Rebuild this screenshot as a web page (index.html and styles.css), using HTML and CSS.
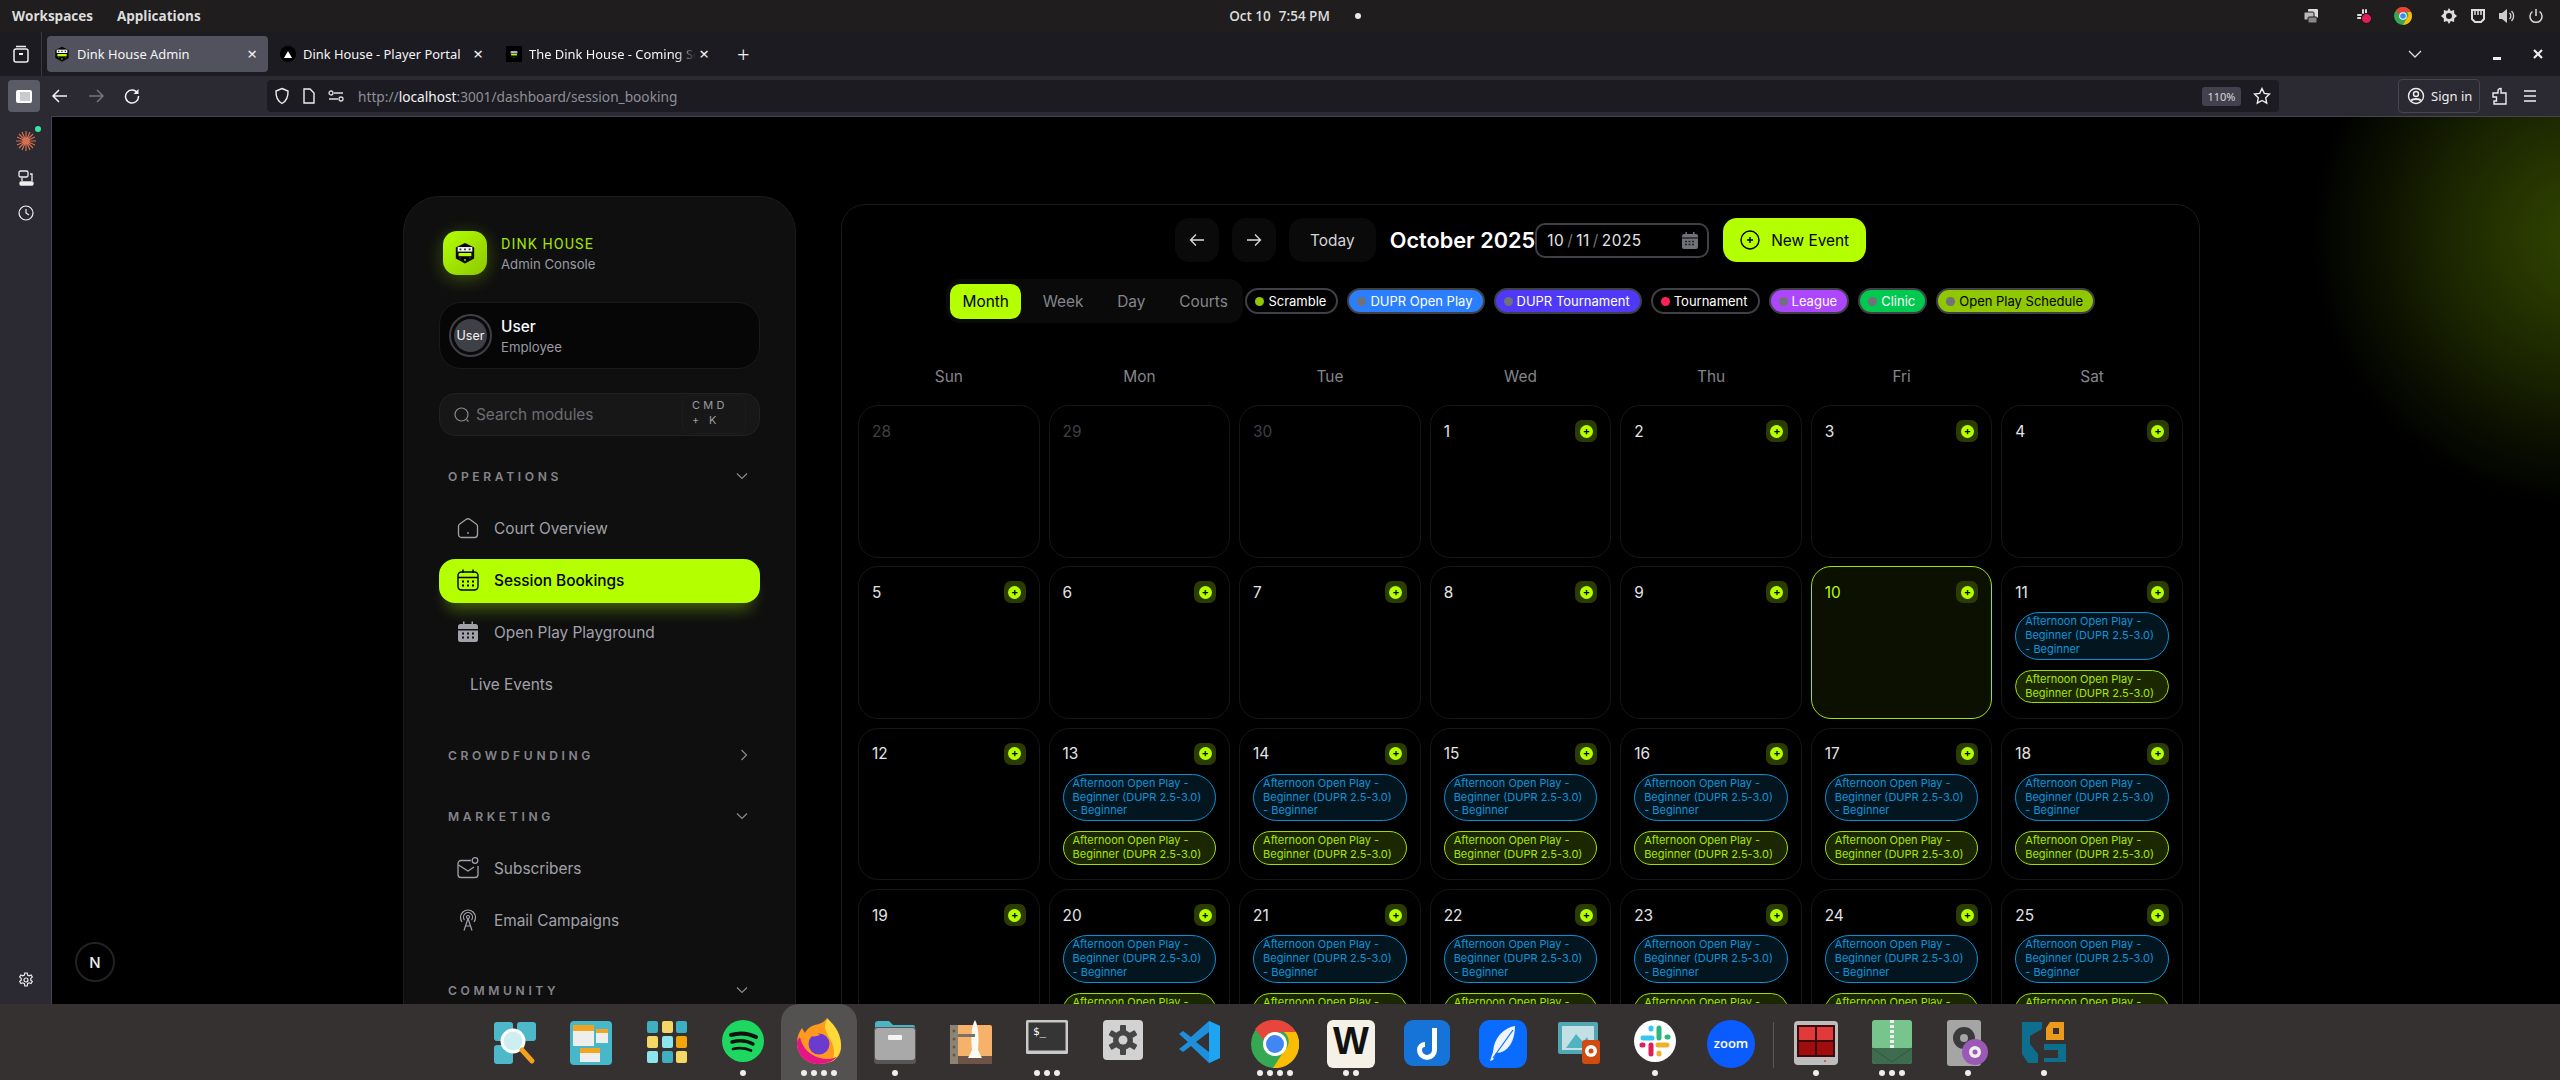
FILE: index.html
```html
<!DOCTYPE html>
<html lang="en">
<head>
    <meta charset="UTF-8">
    <meta name="viewport" content="width=device-width, initial-scale=1.0">
    <title>Dink House Admin</title>
    <link rel="stylesheet" href="styles.css">
</head>
<body>
    <svg class="defs" width="0" height="0">
        <symbol id="shield" viewBox="0 0 24 24">
            <path d="M12 1 22 6v12l-10 5.500L2 18V6z" fill="#050505"/>
            <rect x="4" y="5.500" width="16" height="5" fill="#f2f2f2"/>
            <path d="M6 7h2v2H6zM11 7h2v2h-2zM16 7h2v2h-2z" fill="#333"/>
            <rect x="5" y="12" width="14" height="3.500" fill="#b4ff00"/>
            <path d="M6 17h1v1H6zM17 17h1v1h-1z" fill="#888"/>
            <circle cx="12" cy="19.500" r="1" fill="#b4ff00"/>
        </symbol>
    </svg>

    <!-- desktop top bar -->
    <header class="topbar">
        <div class="topbar-left"><span>Workspaces</span><span>Applications</span></div>
        <div class="topbar-clock"><span>Oct 10</span><span>7:54 PM</span><i class="clock-dot"></i></div>
        <div class="topbar-right">
            <svg class="tray-a" width="18" height="18" viewBox="0 0 18 18"><rect x="6" y="2" width="10" height="9" rx="1" fill="#ddd"/><rect x="2" y="5" width="10" height="8" rx="1" fill="#bbb" stroke="#1f1d1d"/><rect x="6" y="10" width="9" height="6" rx="1" fill="#888" stroke="#1f1d1d"/></svg>
            <svg class="tray-b" width="18" height="18" viewBox="0 0 18 18"><g fill="#ddd"><rect x="2" y="7" width="5" height="2" rx="1"/><rect x="7" y="2" width="2" height="5" rx="1"/><rect x="10" y="2" width="2" height="5" rx="1"/><rect x="2" y="10" width="5" height="2" rx="1"/></g><circle cx="11.500" cy="11.500" r="5" fill="#e01e5a" stroke="#111"/></svg>
            <svg class="tray-c" width="20" height="20" viewBox="0 0 20 20"><circle cx="10" cy="10" r="9" fill="#34a853"/><path d="M10 1a9 9 0 0 1 8 5h-8a4 4 0 0 0-4 3L3 4a9 9 0 0 1 7-3z" fill="#ea4335"/><path d="M18 6a9 9 0 0 1-8 13l4-7a4 4 0 0 0 0-6z" fill="#fbbc04"/><circle cx="10" cy="10" r="3.800" fill="#fff"/><circle cx="10" cy="10" r="2.800" fill="#4285f4"/></svg>
            <svg class="tray-d" width="18" height="18" viewBox="0 0 18 18"><path d="M9 1l1.800 3 3.300-1 .1 3.400L17 9l-2.800 2.600-.1 3.400-3.300-1L9 17l-1.800-3-3.300 1-.1-3.400L1 9l2.800-2.600.1-3.400 3.300 1z" fill="#ddd"/><circle cx="9" cy="9" r="3" fill="#1f1d1d"/></svg>
            <svg width="16" height="16" viewBox="0 0 16 16"><path d="M2 2h12v9l-3 3H5l-3-3z" fill="none" stroke="#ddd" stroke-width="2"/><path d="M5 3v4M8 3v4M11 3v4" stroke="#ddd" stroke-width="1.500"/></svg>
            <svg width="18" height="16" viewBox="0 0 18 16"><path d="M1 5h3l5-4v14l-5-4H1z" fill="#ccc"/><path d="M11.500 5a4 4 0 0 1 0 6M13.500 3a7 7 0 0 1 0 10" fill="none" stroke="#ccc" stroke-width="1.400"/></svg>
            <svg width="16" height="16" viewBox="0 0 16 16" fill="none" stroke="#ddd" stroke-width="1.500"><path d="M8 1v7"/><path d="M4.500 3.500a6 6 0 1 0 7 0"/></svg>
        </div>
    </header>

    <!-- firefox tabs -->
    <div class="tabbar">
        <div class="tabbar-side">
            <svg width="18" height="20" viewBox="0 0 18 20" fill="none" stroke="#eee" stroke-width="1.500"><rect x="2" y="5" width="14" height="13" rx="2"/><path d="M4 2.500h10"/><path d="M7 10h4" stroke-width="2"/></svg>
        </div>
        <div class="tab tab-active">
            <svg class="tab-icon" width="16" height="18"><use href="#shield"/></svg>
            <span class="tab-label">Dink House Admin</span><span class="tab-close">×</span>
        </div>
        <div class="tab">
            <span class="tab-icon fav-tri"><i></i></span>
            <span class="tab-label">Dink House - Player Portal</span><span class="tab-close">×</span>
        </div>
        <div class="tab">
            <span class="tab-icon fav-square"><svg width="10" height="12"><use href="#shield"/></svg></span>
            <span class="tab-label tab-fade">The Dink House - Coming Soon</span><span class="tab-close">×</span>
        </div>
        <span class="tab-plus">+</span>
        <div class="tabbar-right">
            <svg class="tab-chevron" width="16" height="10" viewBox="0 0 16 10" fill="none" stroke="#ddd" stroke-width="1.300"><path d="M2 2l6 6 6-6"/></svg>
            <span class="win-min"></span>
            <svg class="win-close" width="10" height="10" viewBox="0 0 10 10" stroke="#eee" stroke-width="2.200"><path d="M1 1l8 8M9 1l-8 8"/></svg>
        </div>
    </div>

    <!-- firefox toolbar -->
    <div class="toolbar">
        <button class="sidebar-toggle"><i></i></button>
        <svg class="nav-back" width="18" height="16" viewBox="0 0 18 16" fill="none" stroke="#f2f2f2" stroke-width="1.500"><path d="M16 8H3M8 2 2 8l6 6"/></svg>
        <svg class="nav-forward" width="18" height="16" viewBox="0 0 18 16" fill="none" stroke="#75747c" stroke-width="1.500"><path d="M2 8h13M10 2l6 6-6 6"/></svg>
        <svg class="nav-reload" width="16" height="16" viewBox="0 0 16 16" fill="none" stroke="#f2f2f2" stroke-width="1.500"><path d="M13.500 5A6.500 6.500 0 1 0 14.500 8"/><path d="M14.500 1v5h-5" fill="#f2f2f2" stroke="none"/></svg>
        <div class="urlbar">
            <svg width="16" height="18" viewBox="0 0 16 18" fill="none" stroke="#eee" stroke-width="1.400"><path d="M8 1.500 14 4c.3 6-1.500 10-6 12.500C3.500 14 1.700 10 2 4z"/></svg>
            <svg width="14" height="18" viewBox="0 0 14 18" fill="none" stroke="#eee" stroke-width="1.400"><path d="M2 2h6l4 4v10H2z"/></svg>
            <svg width="16" height="14" viewBox="0 0 16 14" fill="none" stroke="#ddd" stroke-width="1.300"><path d="M6 4h9M1 10h9"/><circle cx="3" cy="4" r="2"/><circle cx="13" cy="10" r="2"/></svg>
            <span class="url"><span>http://</span><b>localhost</b><span>:3001/dashboard/session_booking</span></span>
            <span class="zoom-badge">110%</span>
            <svg class="url-star" width="18" height="18" viewBox="0 0 18 18" fill="none" stroke="#eee" stroke-width="1.400"><path d="m9 1.500 2.300 4.900 5.200.7-3.800 3.700 1 5.300L9 13.500l-4.700 2.600 1-5.300-3.800-3.700 5.200-.7z"/></svg>
        </div>
        <div class="signin">
            <svg width="18" height="18" viewBox="0 0 18 18" fill="none" stroke="#eee" stroke-width="1.400"><circle cx="9" cy="9" r="7.500"/><circle cx="9" cy="7" r="2.500"/><path d="M4 13.500c2-2 8-2 10 0" stroke-width="2"/></svg>
            <span>Sign in</span>
        </div>
        <svg class="tool-puzzle" width="16" height="20" viewBox="0 0 16 20" fill="none" stroke="#eee" stroke-width="1.400"><path d="M1 7h5V5a2.500 2.500 0 0 1 3 -2.500V7h5v11H2v-3h2.500v-4H1z"/></svg>
        <svg class="tool-menu" width="16" height="14" viewBox="0 0 16 14" stroke="#eee" stroke-width="1.400"><path d="M2 2h12M2 7h12M2 12h12"/></svg>
    </div>

    <div class="workspace">
        <!-- firefox sidebar -->
        <aside class="ff-side">
            <span class="ff-ext">
                <svg width="20" height="20" viewBox="0 0 20 20" stroke="#d9704f" stroke-width="1.200"><path d="M10 0v20M0 10h20M3 3l14 14M17 3 3 17M6 1l8 18M14 1 6 19M1 6l18 8M19 6 1 14"/><circle cx="10" cy="10" r="3.500" fill="#d9704f" stroke="none"/></svg>
                <i></i>
            </span>
            <svg width="16" height="16" viewBox="0 0 16 16" fill="none" stroke="#eee" stroke-width="1.300"><rect x="1" y="1" width="9" height="6" rx="1.500"/><path d="M12 4h2v7M4 8v3"/><rect x="2" y="12" width="13" height="3" rx="1" fill="#eee"/></svg>
            <svg width="16" height="16" viewBox="0 0 16 16" fill="none" stroke="#eee" stroke-width="1.200"><circle cx="8" cy="8" r="7"/><path d="M8 4v4l3 2"/></svg>
            <svg class="ff-gear" width="16" height="16" viewBox="0 0 16 16" fill="none" stroke="#eee" stroke-width="1.200"><path d="M6.800 1h2.400l.4 2 1.600.8 1.900-.8 1.200 2-1.500 1.400v1.800l1.500 1.300-1.200 2.100-1.900-.8-1.600.9-.4 2.300H6.800l-.4-2.300-1.600-.9-1.900.8-1.200-2.100 1.500-1.300V6.400L1.700 5l1.200-2 1.900.8 1.600-.8z"/><circle cx="8" cy="8" r="2"/></svg>
        </aside>

        <main class="page">
            <div class="glow"></div>
            <div class="next-badge">N</div>

            <!-- admin sidebar -->
            <nav class="panel">
                <div class="brand">
                    <div class="brand-logo"><svg width="22" height="22"><use href="#shield"/></svg></div>
                    <div>
                        <div class="brand-name">DINK HOUSE</div>
                        <div class="brand-sub">Admin Console</div>
                    </div>
                </div>

                <div class="user-card">
                    <div class="avatar"><span>User</span></div>
                    <div>
                        <div class="user-name">User</div>
                        <div class="user-role">Employee</div>
                    </div>
                </div>

                <div class="search">
                    <svg width="16" height="16" viewBox="0 0 16 16" fill="none" stroke="#8a8a90" stroke-width="1.200"><circle cx="7.500" cy="7.500" r="6.500"/><path d="m12.500 12.500 2 2"/></svg>
                    <span class="search-text">Search modules</span>
                    <span class="kbd">CMD + K</span>
                </div>

                <div class="section section-first">
                    <div class="section-head">
                        <span>OPERATIONS</span>
                        <svg class="chev" width="12" height="8" viewBox="0 0 12 8" fill="none" stroke="#8a8a90" stroke-width="1.200"><path d="m1 1.500 5 5 5-5"/></svg>
                    </div>
                    <div class="nav-list">
                        <a class="nav-item">
                            <svg width="22" height="22" viewBox="0 0 22 22" fill="none" stroke="#a1a1aa" stroke-width="1.300"><path d="M1.500 9.500c0-1 .5-1.800 1.300-2.400l6.500-4.800a3 3 0 0 1 3.400 0l6.500 4.800c.8.600 1.300 1.400 1.300 2.400v8a3 3 0 0 1-3 3h-13a3 3 0 0 1-3-3z"/><path d="M11 15v2"/></svg>
                            Court Overview
                        </a>
                        <a class="nav-item nav-active">
                            <svg width="22" height="22" viewBox="0 0 22 22" fill="none" stroke="#000" stroke-width="1.400"><rect x="1" y="3" width="20" height="18" rx="3.500"/><path d="M1 8.500h20M6 .5V4M16 .5V4"/><path d="M5 12.500h2M10 12.500h2M15 12.500h2M5 16.500h2M10 16.500h2M15 16.500h2" stroke-width="2"/></svg>
                            Session Bookings
                        </a>
                        <a class="nav-item">
                            <svg width="22" height="22" viewBox="0 0 22 22" fill="#a1a1aa"><path d="M6 .5h1.500V3h7V.5H16V3h2.500A2.500 2.500 0 0 1 21 5.500V8H1V5.500A2.500 2.500 0 0 1 3.500 3H6z"/><path d="M1 9.500h20v9a2.500 2.500 0 0 1-2.500 2.500h-15A2.500 2.500 0 0 1 1 18.500z"/><path d="M5 12.500h2M10 12.500h2M15 12.500h2M5 16.500h2M10 16.500h2M15 16.500h2" stroke="#0f0f0f" stroke-width="2"/></svg>
                            Open Play Playground
                        </a>
                        <a class="nav-item nav-plain">Live Events</a>
                    </div>
                </div>

                <div class="section section-tight">
                    <div class="section-head">
                        <span>CROWDFUNDING</span>
                        <svg class="chev" width="8" height="12" viewBox="0 0 8 12" fill="none" stroke="#8a8a90" stroke-width="1.200"><path d="m1.500 1 5 5-5 5"/></svg>
                    </div>
                </div>

                <div class="section">
                    <div class="section-head">
                        <span>MARKETING</span>
                        <svg class="chev" width="12" height="8" viewBox="0 0 12 8" fill="none" stroke="#8a8a90" stroke-width="1.200"><path d="m1 1.500 5 5 5-5"/></svg>
                    </div>
                    <div class="nav-list">
                        <a class="nav-item">
                            <svg width="22" height="22" viewBox="0 0 22 22" fill="none" stroke="#a1a1aa" stroke-width="1.300"><path d="M14 3.500H4a3 3 0 0 0-3 3v11a3 3 0 0 0 3 3h14a3 3 0 0 0 3-3V9"/><path d="m1.500 8 9.500 6 6-4"/><circle cx="18" cy="3.500" r="2.800"/></svg>
                            Subscribers
                        </a>
                        <a class="nav-item">
                            <svg width="22" height="22" viewBox="0 0 22 22" fill="none" stroke="#a1a1aa" stroke-width="1.200"><path d="M5 13a7.500 7.500 0 1 1 12 0"/><path d="M7.500 11a4.500 4.500 0 1 1 7 0"/><circle cx="11" cy="8" r="1.500"/><path d="m11 9.500-4 12M11 9.500l4 12M8.500 17h5"/></svg>
                            Email Campaigns
                        </a>
                    </div>
                </div>

                <div class="section section-last">
                    <div class="section-head">
                        <span>COMMUNITY</span>
                        <svg class="chev" width="12" height="8" viewBox="0 0 12 8" fill="none" stroke="#8a8a90" stroke-width="1.200"><path d="m1 1.500 5 5 5-5"/></svg>
                    </div>
                </div>
            </nav>

            <!-- calendar -->
            <section class="calendar">
                <div class="cal-top">
                    <button class="icon-btn"><svg width="16" height="14" viewBox="0 0 16 14" fill="none" stroke="#ddd" stroke-width="1.300"><path d="M15 7H2M7 1.500 1.500 7 7 12.500"/></svg></button>
                    <button class="icon-btn"><svg width="16" height="14" viewBox="0 0 16 14" fill="none" stroke="#ddd" stroke-width="1.300"><path d="M1 7h13M9 1.500 14.500 7 9 12.500"/></svg></button>
                    <button class="today-btn">Today</button>
                    <h2 class="cal-title">October 2025</h2>
                    <div class="date-input">
                        <span>10</span><i>/</i><span>11</span><i>/</i><span>2025</span>
                        <svg width="16" height="18" viewBox="0 0 16 18" fill="#71717a"><path d="M3.500 1h1.500v2h6V1h1.500v2H14a2 2 0 0 1 2 2v1.500H0V5a2 2 0 0 1 2-2h1.500z"/><path d="M0 7.500h16V16a2 2 0 0 1-2 2H2a2 2 0 0 1-2-2z"/><path d="M3 10.500h10M3 13.500h10" stroke="#222" stroke-width="1.500" stroke-dasharray="2 1.500"/></svg>
                    </div>
                    <button class="new-event">
                        <svg width="20" height="20" viewBox="0 0 20 20" fill="none" stroke="#000" stroke-width="1.400"><circle cx="10" cy="10" r="9"/><path d="M10 7v6M7 10h6"/></svg>
                        New Event
                    </button>
                </div>

                <div class="cal-filters">
                    <div class="view-tabs">
                        <button class="view-tab view-active">Month</button>
                        <button class="view-tab">Week</button>
                        <button class="view-tab">Day</button>
                        <button class="view-tab">Courts</button>
                    </div>
                    <span class="chip"><i class="dot-lime"></i>Scramble</span>
                    <span class="chip chip-blue"><i></i>DUPR Open Play</span>
                    <span class="chip chip-indigo"><i></i>DUPR Tournament</span>
                    <span class="chip"><i class="dot-rose"></i>Tournament</span>
                    <span class="chip chip-purple"><i></i>League</span>
                    <span class="chip chip-green"><i></i>Clinic</span>
                    <span class="chip chip-lime"><i></i>Open Play Schedule</span>
                </div>

                <div class="weekdays">
                    <span>Sun</span><span>Mon</span><span>Tue</span><span>Wed</span><span>Thu</span><span>Fri</span><span>Sat</span>
                </div>
                <div class="cal-grid" id="cal-grid"></div>
            </section>
        </main>
    </div>

    <!-- desktop dock -->
    <footer class="dock">
        <div class="dock-item">
            <svg width="46" height="46" viewBox="0 0 46 46"><g fill="#4db8c9"><rect x="2" y="2" width="19" height="19" rx="3"/><rect x="25" y="2" width="19" height="19" rx="3"/><rect x="2" y="25" width="19" height="19" rx="3"/></g><circle cx="21" cy="21" r="11" fill="#cfeef2" stroke="#fff" stroke-width="3"/><path d="m30 30 10 11" stroke="#f2a21b" stroke-width="5" stroke-linecap="round"/></svg>
        </div>
        <div class="dock-item">
            <svg width="44" height="46" viewBox="0 0 44 46"><rect x="1" y="1" width="42" height="44" rx="4" fill="#46b8c9"/><rect x="4" y="5" width="21" height="21" fill="#eee"/><rect x="4" y="5" width="21" height="6" fill="#f4a51f"/><rect x="27" y="9" width="12" height="14" fill="#eee"/><rect x="27" y="9" width="12" height="4" fill="#f4a51f"/><rect x="11" y="28" width="20" height="14" fill="#eee"/><rect x="11" y="28" width="20" height="5" fill="#f4a51f"/></svg>
        </div>
        <div class="dock-item">
            <svg width="42" height="44" viewBox="0 0 42 44"><rect x="1" y="1" width="11" height="12" rx="2" fill="#3fb0c2"/><rect x="16" y="1" width="11" height="12" rx="2" fill="#f5d766"/><rect x="30" y="1" width="11" height="12" rx="2" fill="#3fb0c2"/><rect x="1" y="16" width="11" height="12" rx="2" fill="#f5d766"/><rect x="16" y="16" width="11" height="12" rx="2" fill="#8de6ee"/><rect x="30" y="16" width="11" height="12" rx="2" fill="#f5a50c"/><rect x="1" y="31" width="11" height="12" rx="2" fill="#8de6ee"/><rect x="16" y="31" width="11" height="12" rx="2" fill="#3fb0c2"/><rect x="30" y="31" width="11" height="12" rx="2" fill="#f5d766"/></svg>
        </div>
        <div class="dock-item">
            <svg width="42" height="42" viewBox="0 0 42 42"><circle cx="21" cy="21" r="21" fill="#1ed760"/><g fill="none" stroke="#111" stroke-linecap="round"><path d="M9 15c8-2.500 17-2 25 2" stroke-width="4"/><path d="M10 22c7-2 15-1.500 21 2" stroke-width="3.400"/><path d="M11 29c6-1.500 12-1 18 1.500" stroke-width="2.800"/></g></svg>
            <div class="dots"><i></i></div>
        </div>
        <div class="dock-item dock-active">
            <svg width="48" height="48" viewBox="0 0 48 48"><path d="M32 1c-2 5 0 9 6 13 6 5 9 11 8 18-1 9-10 15-22 15C11 47 2 38 2 26c0-6 2-11 5-15l3 5c3-6 8-8 14-9 3-1 6-3 8-6z" fill="#ff9a1f"/><path d="M32 1c4 4 14 13 14 27 0 8-4 14-10 17 3-4 4-10 2-16-2-8-9-14-8-21z" fill="#ffd83a"/><path d="M2 26c0 12 9 21 22 21 8 0 14-3 18-7-5 2-11 3-17 1C14 38 7 30 5 20c-2 2-3 4-3 6z" fill="#e31587"/><circle cx="24" cy="27" r="10.500" fill="#6b3bd0"/><path d="M12 17c4-3 10-2 13 1-3 1-6 2-9 1z" fill="#ff9a1f"/></svg>
            <div class="dots"><i></i><i></i><i></i><i></i></div>
        </div>
        <div class="dock-item">
            <svg width="42" height="44" viewBox="0 0 42 44"><path d="M1 4a3 3 0 0 1 3-3h11l4 4h20a2 2 0 0 1 2 2v8H1z" fill="#4ab4c6"/><rect x="0" y="7" width="42" height="37" rx="3" fill="#565656"/><rect x="1" y="8" width="40" height="32" rx="3" fill="#a9a9a9"/><rect x="14" y="15" width="14" height="5" rx="1" fill="#f4f4f4"/></svg>
            <div class="dots"><i></i></div>
        </div>
        <div class="dock-item">
            <svg width="42" height="44" viewBox="0 0 42 44"><rect x="0" y="5" width="42" height="39" rx="2" fill="#f6b26b"/><rect x="0" y="5" width="8" height="39" fill="#8d8472"/><g fill="#5f5a50"><circle cx="4" cy="11" r="1.500"/><circle cx="4" cy="19" r="1.500"/><circle cx="4" cy="27" r="1.500"/><circle cx="4" cy="35" r="1.500"/></g><rect x="8" y="36" width="34" height="8" fill="#6e5346"/><path d="M25 0c4 6 4 22 3 30l4 8H18l4-8c-1-8-1-24 3-30z" fill="#fbfbf5"/><rect x="8" y="14" width="17" height="3" fill="#7a7266"/></svg>
        </div>
        <div class="dock-item">
            <svg width="44" height="34" viewBox="0 0 44 34"><rect x="1" y="0" width="42" height="34" rx="1.500" fill="#c9c9c9"/><rect x="3.500" y="2.500" width="37" height="28" fill="#353535"/><text x="8" y="15" class="term-text">$_</text></svg>
            <div class="dots"><i></i><i></i><i></i></div>
        </div>
        <div class="dock-item">
            <svg width="40" height="40" viewBox="0 0 40 40"><rect width="40" height="40" rx="4" fill="#d2d2d2"/><g fill="#464646"><circle cx="20" cy="20" r="10"/><rect x="17" y="5" width="6" height="30" rx="1"/><rect x="17" y="5" width="6" height="30" rx="1" transform="rotate(60 20 20)"/><rect x="17" y="5" width="6" height="30" rx="1" transform="rotate(120 20 20)"/></g><circle cx="20" cy="20" r="4.500" fill="#d2d2d2"/></svg>
        </div>
        <div class="dock-item">
            <svg width="44" height="44" viewBox="0 0 44 44"><path d="M32 1 43 6v32l-11 5-18-17-8 6-4-3 9-7-9-8 4-3 8 6z" fill="#1d8fdc"/><path d="M32 1 43 6v32l-11 5z" fill="#1fa4ef"/><path d="M32 12 19 22l13 10z" fill="#353130"/></svg>
        </div>
        <div class="dock-item">
            <svg width="48" height="48" viewBox="0 0 48 48"><circle cx="24" cy="24" r="24" fill="#34a853"/><path d="M24 0a24 24 0 0 1 21 12H24a12 12 0 0 0-11.500 8L4 9A24 24 0 0 1 24 0z" fill="#e8453c"/><path d="M45 12a24 24 0 0 1-23 36l11-17a12 12 0 0 0 0-19z" fill="#fbbc04"/><circle cx="24" cy="24" r="12" fill="#fff"/><circle cx="24" cy="24" r="9" fill="#4285f4"/></svg>
            <div class="dots"><i></i><i></i><i></i><i></i></div>
        </div>
        <div class="dock-item">
            <svg width="48" height="48" viewBox="0 0 48 48"><rect width="48" height="48" rx="6" fill="#f6f1e7"/><text x="24" y="34" class="w-text">W</text></svg>
            <div class="dots"><i></i><i></i></div>
        </div>
        <div class="dock-item">
            <svg width="46" height="46" viewBox="0 0 46 46"><rect width="46" height="46" rx="9" fill="#1673d8"/><path d="M28 8h5v22a10 10 0 0 1-20 0 8 8 0 0 1 8-8v5a3 3 0 0 0-3 3 5 5 0 0 0 10 0z" fill="#fff"/></svg>
        </div>
        <div class="dock-item">
            <svg width="48" height="48" viewBox="0 0 48 48"><rect width="48" height="48" rx="11" fill="#0a6cff"/><path d="M36 6c-12 2-21 12-22 26l-3 9 3-1 3-7c12 0 19-12 19-27z" fill="#eef5ff"/><path d="M34 10 14 38" stroke="#0a6cff" stroke-width="1.200"/></svg>
        </div>
        <div class="dock-item">
            <svg width="42" height="44" viewBox="0 0 42 44"><rect x="0" y="2" width="40" height="32" rx="2" fill="#53a7b5"/><rect x="4" y="6" width="32" height="24" fill="#c3e1e4"/><path d="M8 28 18 14l7 8 4-5 5 11z" fill="#4fb3c2"/><rect x="24" y="20" width="18" height="24" rx="3" fill="#d14a10"/><circle cx="33" cy="31" r="6" fill="#fff"/><circle cx="33" cy="31" r="2.500" fill="#d14a10"/></svg>
        </div>
        <div class="dock-item">
            <svg width="42" height="42" viewBox="0 0 42 42"><circle cx="21" cy="21" r="21" fill="#fff"/><g stroke-linecap="round" stroke-width="5" fill="none"><path d="M9 18h9M17 8v1" stroke="#36c5f0"/><path d="M25 8v10M33 17h1" stroke="#2eb67d"/><path d="M24 25h9M25 33v1" stroke="#ecb22e"/><path d="M17 25v9M8 25h1" stroke="#e01e5a"/></g></svg>
            <div class="dots"><i></i></div>
        </div>
        <div class="dock-item">
            <svg width="48" height="48" viewBox="0 0 48 48"><circle cx="24" cy="24" r="24" fill="#0b5cff"/><text x="24" y="28" class="zoom-text">zoom</text></svg>
        </div>
        <span class="dock-sep"></span>
        <div class="dock-item">
            <svg width="46" height="46" viewBox="0 0 46 46"><rect x="1" y="1" width="44" height="44" rx="4" fill="#bdbdbd"/><rect x="4" y="5" width="38" height="32" fill="#3c0a0a"/><rect x="6" y="7" width="16" height="13" fill="#e03a3a"/><rect x="24" y="7" width="16" height="13" fill="#e03a3a"/><rect x="6" y="22" width="16" height="13" fill="#a00d0d"/><rect x="24" y="22" width="16" height="13" fill="#a00d0d"/><circle cx="32" cy="41" r="1" fill="#e03a3a"/></svg>
            <div class="dots"><i></i></div>
        </div>
        <div class="dock-item">
            <svg width="40" height="44" viewBox="0 0 40 44"><rect width="40" height="44" rx="3" fill="#77c48d"/><path d="M0 28h40v13a3 3 0 0 1-3 3H3a3 3 0 0 1-3-3z" fill="#3f6b4e"/><path d="m0 28 20 14 20-14" fill="none" stroke="#2f5a3e" stroke-width="1"/><path d="M20 0v28" stroke="#eee" stroke-width="4" stroke-dasharray="3 2"/></svg>
            <div class="dots"><i></i><i></i><i></i></div>
        </div>
        <div class="dock-item">
            <svg width="42" height="46" viewBox="0 0 42 46"><rect x="0" y="0" width="34" height="46" rx="3" fill="#a5a5a5"/><circle cx="17" cy="18" r="11" fill="#3a3a3a"/><circle cx="17" cy="18" r="4" fill="#a5a5a5"/><circle cx="28" cy="32" r="13" fill="#9b59b6"/><circle cx="28" cy="32" r="6" fill="#eee"/><circle cx="28" cy="32" r="2.500" fill="#9b59b6"/></svg>
            <div class="dots"><i></i></div>
        </div>
        <div class="dock-item">
            <svg width="48" height="44" viewBox="0 0 48 44"><path d="M2 2h20v7L10 16v8l8 10v9H8L2 34z" fill="#0d6f8d"/><path d="M30 2h14v18H26V8z" fill="#ec9a1c"/><rect x="33" y="8" width="6" height="6" fill="#353130"/><path d="M24 24h22v18H24v-4h14V30H24z" fill="#0d6f8d"/></svg>
            <div class="dots"><i></i></div>
        </div>
    </footer>

    <script src="script.js"></script>
</body>
</html>
```

FILE: styles.css
```css
* {
    box-sizing: border-box;
}

body {
    margin: 0;
    width: 2560px;
    height: 1080px;
    overflow: hidden;
    display: flex;
    flex-direction: column;
    background: #000;
    font-family: Inter, "Noto Sans", sans-serif;
    color: #fff;
}

button {
    font-family: inherit;
    border: none;
    cursor: pointer;
}

.defs {
    position: absolute;
}

/* desktop top bar */
.topbar {
    height: 32px;
    flex: none;
    display: grid;
    grid-template-columns: 1fr auto 1fr;
    align-items: center;
    padding: 0 16px 0 12px;
    background: #1f1d1d;
    font-family: "Open Sans", sans-serif;
    font-size: 13.5px;
    font-weight: 700;
    color: #dcdcdc;
}

.topbar-left {
    display: flex;
    gap: 24px;
}

.topbar-clock {
    display: flex;
    align-items: center;
    gap: 8px;
    margin-left: 34px;
    font-weight: 600;
}

.clock-dot {
    width: 6px;
    height: 6px;
    margin-left: 17px;
    border-radius: 50%;
    background: #e8e8e8;
}

.topbar-right {
    display: flex;
    align-items: center;
    justify-content: flex-end;
    gap: 12px;
}

.tray-a {
    margin-right: 23px;
}

.tray-b {
    margin-right: 8px;
}

.tray-c {
    margin-right: 15px;
}

/* firefox tabs */
.tabbar {
    height: 44px;
    flex: none;
    display: flex;
    align-items: center;
    gap: 5px;
    background: #1c1b22;
    font-family: "Noto Sans", sans-serif;
    font-size: 12.9px;
    color: #f4f4f4;
}

.tabbar-side {
    width: 42px;
    height: 44px;
    display: flex;
    align-items: center;
    justify-content: center;
    border-right: 1px solid #3a3941;
}

.tab {
    width: 221px;
    height: 36px;
    display: flex;
    align-items: center;
    padding: 0 8px 0 7px;
    border-radius: 4px;
}

.tab-active {
    background: #52525e;
}

.tab-icon {
    width: 16px;
    height: 16px;
    margin-right: 7px;
    flex: none;
}

.fav-tri {
    display: flex;
    align-items: center;
    justify-content: center;
    background: #000;
    border-radius: 50%;
}

.fav-tri i {
    width: 0;
    height: 0;
    border-left: 4px solid transparent;
    border-right: 4px solid transparent;
    border-bottom: 7px solid #fff;
}

.fav-square {
    display: flex;
    align-items: center;
    justify-content: center;
    background: #000;
}

.tab-label {
    flex: 1;
    overflow: hidden;
    white-space: nowrap;
}

.tab-fade {
    -webkit-mask-image: linear-gradient(90deg, #000 88%, transparent);
    mask-image: linear-gradient(90deg, #000 88%, transparent);
}

.tab-close {
    width: 16px;
    text-align: center;
    font-size: 17px;
    line-height: 16px;
}

.tab-plus {
    margin-left: 12px;
    font-size: 22px;
    font-weight: 300;
    line-height: 1;
}

.tabbar-right {
    margin-left: auto;
    display: flex;
    align-items: center;
}

.tab-chevron {
    margin-right: 70px;
}

.win-min {
    width: 8px;
    height: 3px;
    margin-right: 32px;
    margin-top: 8px;
    background: #eee;
}

.win-close {
    margin-right: 17px;
}

/* firefox toolbar */
.toolbar {
    height: 40px;
    flex: none;
    display: flex;
    align-items: center;
    background: #2b2a33;
    font-family: "Noto Sans", sans-serif;
}

.sidebar-toggle {
    width: 32px;
    height: 32px;
    margin-left: 8px;
    display: flex;
    align-items: center;
    justify-content: center;
    background: #5b5b66;
    border-radius: 4px;
}

.sidebar-toggle i {
    width: 16px;
    height: 13px;
    border: 2px solid #fff;
    border-left-width: 4px;
    border-radius: 2px;
    background: #c9c9d0;
}

.nav-back {
    margin-left: 11px;
}

.nav-forward {
    margin-left: 18px;
}

.nav-reload {
    margin-left: 19px;
}

.urlbar {
    width: 2012px;
    height: 32px;
    margin-left: 127px;
    display: flex;
    align-items: center;
    gap: 12px;
    padding: 0 8px 0 7px;
    background: #1c1b22;
    border-radius: 4px;
}

.url {
    font-size: 13.7px;
    color: #8f8f96;
    white-space: nowrap;
    margin-left: 2px;
}

.url b {
    font-weight: 400;
    color: #f4f4f4;
}

.zoom-badge {
    margin-left: auto;
    width: 39px;
    height: 19px;
    display: flex;
    align-items: center;
    justify-content: center;
    background: #42414d;
    border-radius: 3px;
    font-size: 11px;
    color: #d8d8dc;
}

.signin {
    width: 82px;
    height: 34px;
    margin-left: 119px;
    display: flex;
    align-items: center;
    gap: 6px;
    padding-left: 8px;
    border: 1px solid #46454f;
    border-radius: 4px;
    font-size: 13px;
    color: #eee;
}

.tool-puzzle {
    margin-left: 12px;
}

.tool-menu {
    margin-left: 14px;
}

/* firefox sidebar + page */
.workspace {
    flex: 1;
    min-height: 0;
    display: flex;
}

.ff-side {
    width: 52px;
    flex: none;
    display: flex;
    flex-direction: column;
    align-items: center;
    padding: 15px 0 16px;
    gap: 19px;
    background: #2b2a33;
    border-right: 1px solid #46454f;
}

.ff-ext {
    position: relative;
    width: 20px;
    height: 20px;
}

.ff-ext i {
    position: absolute;
    top: -5px;
    right: -5px;
    width: 6px;
    height: 6px;
    border-radius: 50%;
    background: #35e8a0;
}

.ff-gear {
    margin-top: auto;
}

.page {
    position: relative;
    flex: 1;
    min-width: 0;
    display: flex;
    align-items: flex-start;
    gap: 45px;
    padding: 79px 0 0 351px;
    overflow: hidden;
    background: #000;
    border-top: 1px solid #46454f;
}

.glow {
    position: absolute;
    inset: 0;
    background: radial-gradient(circle 270px at calc(100% + 20px) 120px, #304300 0%, #283800 22%, #1a2400 52%, #0a0f00 78%, transparent 100%);
}

.next-badge {
    position: absolute;
    left: 23px;
    top: 825px;
    width: 40px;
    height: 40px;
    display: flex;
    align-items: center;
    justify-content: center;
    border: 2px solid #222;
    border-radius: 50%;
    background: #000;
    font-size: 15px;
    font-weight: 500;
    color: #eee;
}

/* admin sidebar */
.panel {
    position: relative;
    width: 393px;
    flex: none;
    min-height: 900px;
    padding: 34px 35px 0;
    background: #0f0f0f;
    border: 1px solid #1c1c1c;
    border-radius: 36px;
}

.brand {
    display: flex;
    align-items: center;
    gap: 14px;
    padding-left: 4px;
}

.brand-logo {
    width: 44px;
    height: 44px;
    display: flex;
    align-items: center;
    justify-content: center;
    border-radius: 14px;
    background: linear-gradient(135deg, #b4ff00, #8cc800);
    box-shadow: 0 4px 18px rgba(180, 255, 0, 0.28);
}

.brand-name {
    padding-top: 2px;
    font-family: Roboto, sans-serif;
    font-size: 14.3px;
    letter-spacing: 1.1px;
    line-height: 20px;
    color: #a4e300;
}

.brand-sub {
    font-size: 13.2px;
    line-height: 20px;
    color: #9a9aa2;
}

.user-card {
    height: 67px;
    margin-top: 27px;
    display: flex;
    align-items: center;
    gap: 9px;
    padding-left: 9px;
    background: #060606;
    border: 1px solid #1a1a1a;
    border-radius: 22px;
}

.avatar {
    width: 43px;
    height: 43px;
    padding: 3px;
    border: 2px solid #3f3f46;
    border-radius: 50%;
    background: #0a0a0a;
}

.avatar span {
    width: 100%;
    height: 100%;
    display: flex;
    align-items: center;
    justify-content: center;
    border-radius: 50%;
    background: #3f3f46;
    font-size: 12.5px;
    color: #f4f4f5;
}

.user-name {
    padding-top: 2px;
    font-size: 15.4px;
    font-weight: 500;
    line-height: 22px;
}

.user-role {
    font-size: 13.2px;
    line-height: 19px;
    color: #9a9aa2;
}

.search {
    height: 43px;
    margin-top: 24px;
    display: flex;
    align-items: center;
    padding: 0 13px 0 14px;
    background: #171717;
    border: 1px solid #212121;
    border-radius: 16px;
}

.search-text {
    margin-left: 6px;
    font-size: 15.4px;
    color: #6d6d73;
}

.kbd {
    width: 64px;
    height: 39px;
    margin-left: auto;
    padding: 2px 9px;
    border: 1px solid #1c1c1c;
    border-radius: 8px;
    font-size: 11px;
    line-height: 15px;
    letter-spacing: 3.3px;
    color: #9a9aa2;
}

.section {
    margin-top: 39px;
}

.section-first {
    margin-top: 29px;
}

.section-tight {
    margin-top: 37px;
}

.section-last {
    margin-top: 36px;
}

.section-head {
    height: 22px;
    display: flex;
    align-items: center;
    justify-content: space-between;
    padding: 0 12px 0 9px;
    font-size: 12.1px;
    font-weight: 600;
    letter-spacing: 3.63px;
    color: #85858c;
}

.nav-list {
    margin-top: 20px;
    display: flex;
    flex-direction: column;
    gap: 8px;
}

.nav-item {
    height: 44px;
    display: flex;
    align-items: center;
    gap: 15px;
    padding: 0 0 2px 18px;
    border-radius: 16px;
    font-size: 15.4px;
    color: #a1a1aa;
}

.nav-active {
    background: #b4ff00;
    color: #000;
    font-weight: 500;
    box-shadow: 0 14px 16px -8px rgba(180, 255, 0, 0.35);
}

.nav-plain {
    padding-left: 31px;
}

/* calendar */
.calendar {
    position: relative;
    width: 1359px;
    flex: none;
    margin-top: 8px;
    min-height: 900px;
    padding: 13px 16px 0;
    background: #000;
    border: 1px solid #1a1a1a;
    border-radius: 24px;
}

.cal-top {
    display: flex;
    align-items: center;
    justify-content: center;
}

.icon-btn {
    width: 44px;
    height: 44px;
    margin-right: 13px;
    display: flex;
    align-items: center;
    justify-content: center;
    background: #0a0a0a;
    border-radius: 14px;
}

.today-btn {
    width: 87px;
    height: 44px;
    background: #0a0a0a;
    border-radius: 14px;
    font-size: 15.4px;
    color: #d4d4d8;
}

.cal-title {
    margin: 0 0 0 14px;
    font-size: 21.7px;
    font-weight: 600;
    white-space: nowrap;
}

.date-input {
    width: 174px;
    height: 35px;
    display: flex;
    align-items: center;
    padding: 0 9px 0 10px;
    border: 2px solid #3f3f46;
    border-radius: 10px;
    font-size: 15.4px;
    letter-spacing: 0.5px;
    color: #e4e4e7;
}

.date-input i {
    margin: 0 3px;
    font-style: normal;
    color: #71717a;
}

.date-input svg {
    margin-left: auto;
}

.new-event {
    width: 143px;
    height: 44px;
    margin-left: 14px;
    display: flex;
    align-items: center;
    justify-content: center;
    gap: 11px;
    background: #b4ff00;
    border-radius: 14px;
    font-size: 15.4px;
    color: #000;
}

.cal-filters {
    margin-top: 17px;
    display: flex;
    align-items: center;
    justify-content: center;
    gap: 9px;
}

.view-tabs {
    height: 44px;
    display: flex;
    align-items: center;
    gap: 8.8px;
    padding: 0 3px 0 4px;
    margin-right: -7px;
    background: #0a0a0a;
    border-radius: 14px;
}

.view-tab {
    height: 35px;
    padding: 0 12.5px;
    background: none;
    border-radius: 10px;
    font-size: 15.4px;
    color: #85858c;
}

.view-active {
    background: #b4ff00;
    color: #000;
}

.chip {
    height: 26px;
    display: flex;
    align-items: center;
    gap: 4px;
    padding: 0 10px 0 8px;
    border: 2px solid #3f3f46;
    border-radius: 13px;
    font-size: 13px;
    color: #fff;
    white-space: nowrap;
}

.chip i {
    width: 9px;
    height: 9px;
    border-radius: 50%;
    background: #71717a;
}

.chip i.dot-lime {
    background: #8fc700;
}

.chip i.dot-rose {
    background: #ff2056;
}

.chip-blue {
    background: #2b7fff;
}

.chip-indigo {
    background: #4f39f6;
}

.chip-purple {
    background: #ad46ff;
}

.chip-green {
    background: #00c950;
}

.chip-lime {
    background: #8fc700;
    color: #000;
}

.weekdays {
    margin-top: 43px;
    display: grid;
    grid-template-columns: repeat(7, 1fr);
    column-gap: 8.8px;
    text-align: center;
    font-size: 15.4px;
    line-height: 22px;
    color: #85858c;
}

.cal-grid {
    margin-top: 17px;
    display: grid;
    grid-template-columns: repeat(7, 1fr);
    grid-auto-rows: 152.6px;
    gap: 8.8px;
}

.cell {
    display: flex;
    flex-direction: column;
    gap: 9px;
    padding: 14px 13px 0;
    background: #000;
    border: 1.5px solid #161616;
    border-radius: 20px;
}

.cell-head {
    height: 22px;
    flex: none;
    display: flex;
    align-items: center;
    justify-content: space-between;
    font-size: 15.4px;
    color: #e4e4e7;
}

.cell-muted .cell-head {
    color: #3f3f46;
}

.cell-today {
    background: #0c1000;
    border-color: #a4e300;
}

.cell-today .cell-head {
    color: #b4ff00;
}

.add-btn {
    width: 22px;
    height: 22px;
    display: flex;
    align-items: center;
    justify-content: center;
    border-radius: 7px;
    background: #2c3b00;
}

.add-btn i {
    width: 13px;
    height: 13px;
    display: flex;
    align-items: center;
    justify-content: center;
    border-radius: 50%;
    background: #b4ff00;
    font-style: normal;
    font-size: 11px;
    font-weight: 600;
    line-height: 1;
    color: #000;
}

.pill {
    flex: none;
    padding: 2px 9px;
    border: 1px solid;
    border-radius: 24px;
    font-size: 11px;
    line-height: 13.8px;
}

.pill + .pill {
    margin-top: 1px;
}

.pill-blue {
    background: #03161f;
    border-color: #0a8fd4;
    color: #0d94da;
}

.pill-lime {
    background: #1b2700;
    border-color: #a0dc00;
    color: #a8e600;
}

/* desktop dock */
.dock {
    height: 76px;
    flex: none;
    display: flex;
    padding-left: 477px;
    background: #353130;
    position: relative;
}

.dock-item {
    position: relative;
    width: 76px;
    height: 76px;
    display: flex;
    justify-content: center;
    padding-top: 16px;
}

.dock-active {
    background: #545251;
    border-radius: 18px 18px 0 0;
    padding-top: 13px;
}

.dock-sep {
    width: 1px;
    height: 46px;
    margin: 18px 4px 0;
    background: #5b5756;
}

.dots {
    position: absolute;
    left: 0;
    right: 0;
    bottom: 4px;
    display: flex;
    justify-content: center;
    gap: 4px;
}

.dots i {
    width: 6px;
    height: 6px;
    border-radius: 50%;
    background: #eee;
}

.term-text {
    font-family: "DejaVu Sans Mono", monospace;
    font-size: 11px;
    fill: #fff;
}

.w-text {
    font-family: "Liberation Sans", sans-serif;
    font-size: 38px;
    font-weight: 700;
    text-anchor: middle;
    fill: #111;
}

.zoom-text {
    font-family: "Open Sans", sans-serif;
    font-size: 13px;
    font-weight: 600;
    text-anchor: middle;
    fill: #fff;
}
```

FILE: script.js
```js
const GRID_START = [28, 29, 30];
const DAYS_SHOWN = 25;
const TODAY = 10;
const FIRST_EVENT_DAY = 11;
const EMPTY_DAYS = [12, 19];

const BLUE_TITLE = 'Afternoon Open Play - Beginner (DUPR 2.5-3.0) - Beginner';
const LIME_TITLE = 'Afternoon Open Play - Beginner (DUPR 2.5-3.0)';

function createPill(kind, title) {
    const pill = document.createElement('div');
    pill.className = `pill pill-${kind}`;
    pill.textContent = title;
    return pill;
}

function createCell(day, muted) {
    const cell = document.createElement('div');
    cell.className = 'cell';
    if (muted) cell.classList.add('cell-muted');
    if (!muted && day === TODAY) cell.classList.add('cell-today');

    const head = document.createElement('div');
    head.className = 'cell-head';
    const number = document.createElement('span');
    number.textContent = day;
    head.appendChild(number);

    if (!muted) {
        const add = document.createElement('span');
        add.className = 'add-btn';
        add.innerHTML = '<i>+</i>';
        head.appendChild(add);
    }
    cell.appendChild(head);

    if (!muted && day >= FIRST_EVENT_DAY && !EMPTY_DAYS.includes(day)) {
        cell.appendChild(createPill('blue', BLUE_TITLE));
        cell.appendChild(createPill('lime', LIME_TITLE));
    }
    return cell;
}

const grid = document.getElementById('cal-grid');
GRID_START.forEach(day => grid.appendChild(createCell(day, true)));
for (let day = 1; day <= DAYS_SHOWN; day++) {
    grid.appendChild(createCell(day, false));
}
```
